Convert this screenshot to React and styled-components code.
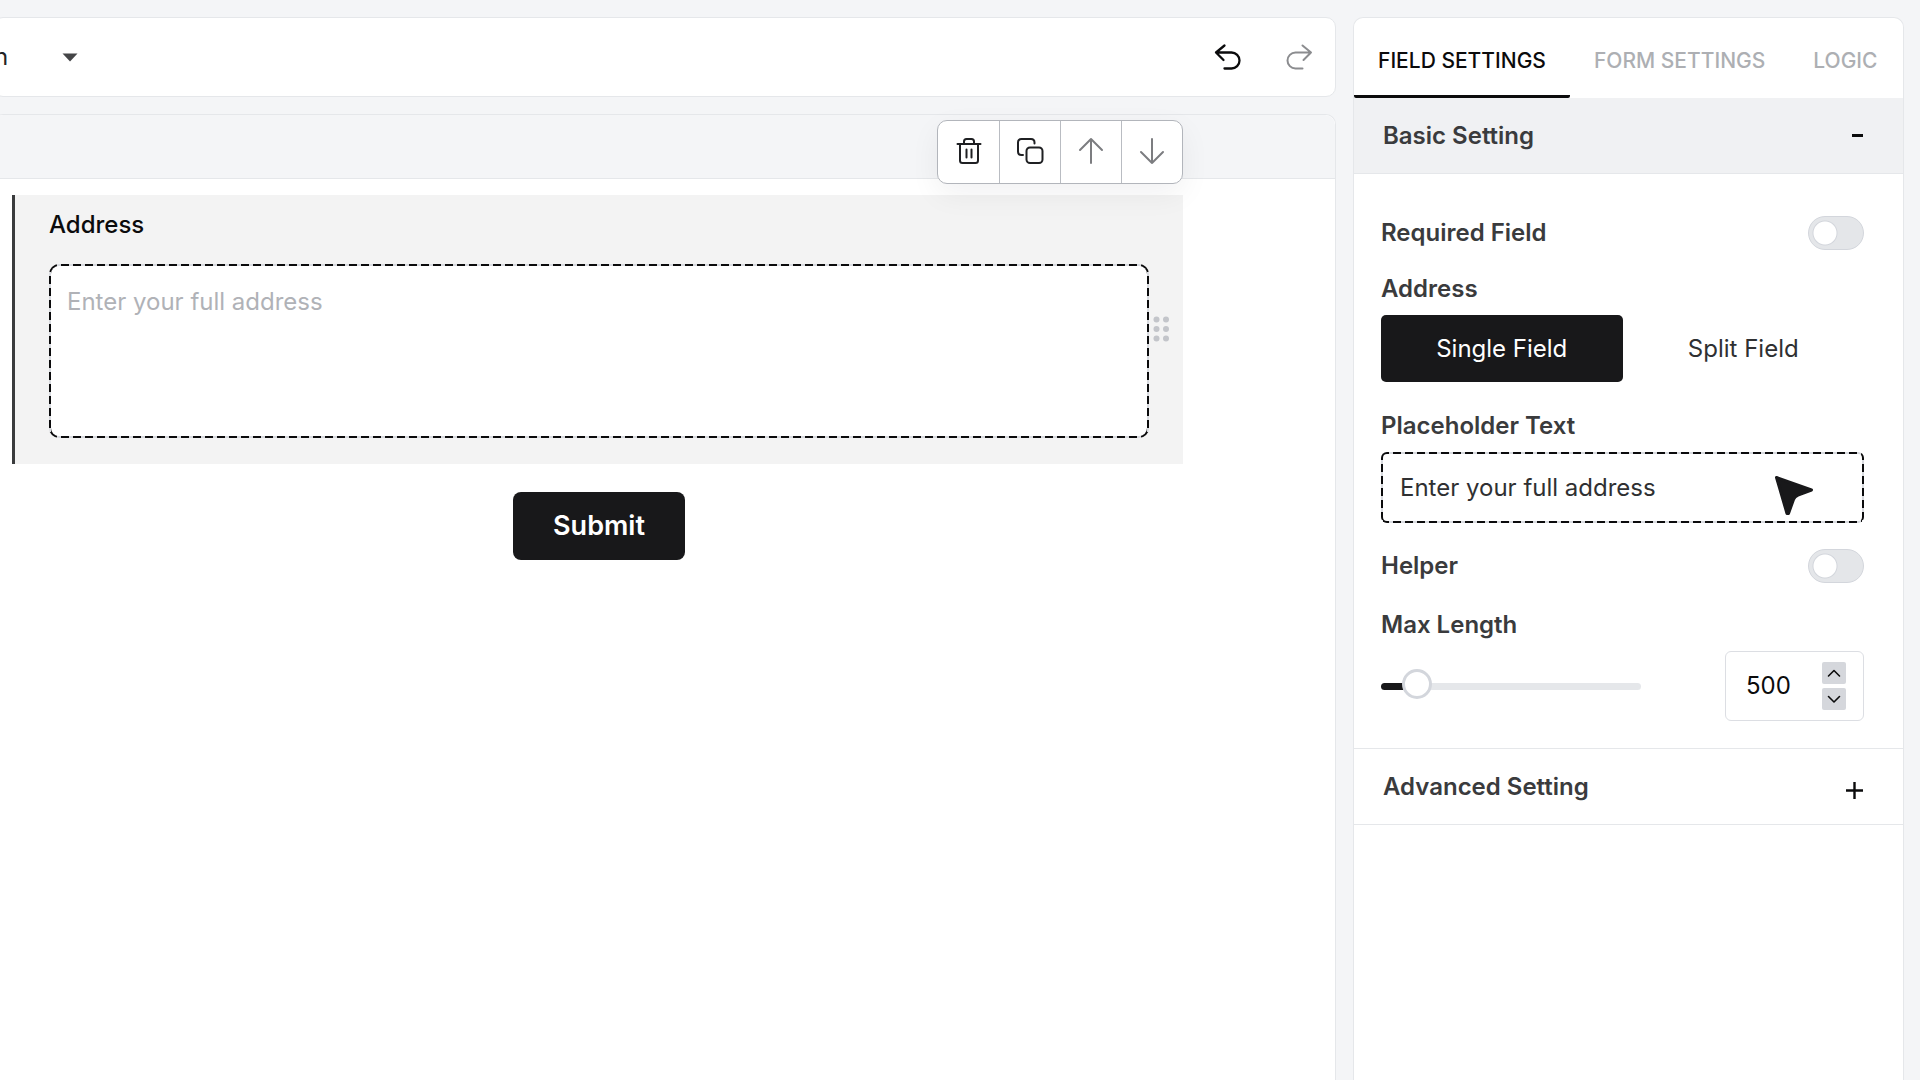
import React, { useState } from "react";
import styled, { createGlobalStyle, css } from "styled-components";

const GlobalStyle = createGlobalStyle`
  *, *::before, *::after { box-sizing: border-box; }
  html, body { margin: 0; padding: 0; }
  body {
    background: #f4f5f7;
    color: #0b0b0c;
    font-family: Inter, "Liberation Sans", sans-serif;
    font-size: 24px;
    line-height: 32px;
    -webkit-font-smoothing: antialiased;
  }
  button, input, select, textarea { font: inherit; color: inherit; margin: 0; }
  button { border: 0; background: none; padding: 0; cursor: pointer; }
`;

const line = "#e5e7ea";

const dashedFrame = css`
  border: 2px solid transparent;
  background:
    linear-gradient(#fff, #fff) padding-box,
    repeating-linear-gradient(180deg, #0b0b0c 0 8px, #d9dbe0 8px 12px) left / 2px 100% no-repeat border-box,
    repeating-linear-gradient(180deg, #0b0b0c 0 8px, #d9dbe0 8px 12px) right / 2px 100% no-repeat border-box,
    repeating-linear-gradient(90deg, #0b0b0c 0 8px, #d9dbe0 8px 12px) border-box;
`;

const Page = styled.div`
  display: grid;
  grid-template-columns: minmax(0, 1fr) 551px;
  gap: 17px;
  height: 100vh;
  padding: 17px 16px 0 0;
  overflow: hidden;
`;

const Workspace = styled.main`
  display: flex;
  flex-direction: column;
  gap: 17px;
  min-width: 0;
  margin-left: -7px;
`;

const TopBar = styled.header`
  display: flex;
  align-items: center;
  justify-content: space-between;
  height: 80px;
  padding: 0 22px 0 0;
  background: #fff;
  border: 1px solid ${line};
  border-radius: 10px;
`;

const FormPicker = styled.label`
  display: flex;
  align-items: center;
`;

const FormSelect = styled.select`
  appearance: none;
  width: 68px;
  padding: 0;
  border: 0;
  background: transparent;
  color: #222325;
`;

const History = styled.div`
  display: flex;
  gap: 43px;
`;

const HistoryButton = styled.button`
  display: flex;
  color: ${(p) => (p.$muted ? "#8b8c8f" : "#0b0b0c")};
`;

const Canvas = styled.section`
  flex: 1;
  display: flex;
  flex-direction: column;
  background: #fff;
  border: 1px solid ${line};
  border-bottom: 0;
  border-radius: 10px 10px 0 0;
`;

const CanvasStrip = styled.div`
  height: 64px;
  background: #f4f5f7;
  border-bottom: 1px solid ${line};
  border-radius: 10px 10px 0 0;
`;

const Form = styled.form`
  display: flex;
  flex-direction: column;
  gap: 28px;
  padding: 16px 152px 0 18px;
`;

const FieldBlock = styled.div`
  position: relative;
  display: flex;
  flex-direction: column;
  gap: 23px;
  width: 100%;
  padding: 14px 34px 26px;
  background: #f3f3f3;
  border-left: 3px solid #3a3b3d;
`;

const FieldLabel = styled.label`
  font-weight: 500;
`;

const AddressArea = styled.textarea`
  ${dashedFrame}
  display: block;
  width: 100%;
  height: 174px;
  padding: 20px 16px;
  border-radius: 10px;
  resize: none;
  &::placeholder { color: #b0b2b7; opacity: 1; }
`;

const FieldTools = styled.div`
  position: absolute;
  top: -75px;
  right: 0;
  display: flex;
  border: 1px solid #b2b5bb;
  border-radius: 10px;
  background: #fff;
  box-shadow: 0 10px 30px rgba(20, 24, 32, 0.06);
`;

const ToolButton = styled.button`
  display: flex;
  align-items: center;
  justify-content: center;
  width: 61px;
  height: 62px;
  padding-bottom: 2px;
  color: ${(p) => (p.$muted ? "#7c7d80" : "#1f2023")};
  & + & { border-left: 1px solid #b9bcc2; }
`;

const DragHandle = styled.button`
  position: absolute;
  top: 121px;
  right: 13px;
  display: flex;
  cursor: grab;
`;

const Actions = styled.div`
  display: flex;
  justify-content: center;
  padding-left: 3px;
`;

const SubmitButton = styled.button`
  height: 68px;
  padding: 0 40px;
  border-radius: 8px;
  background: #18181a;
  color: #fff;
  font-size: 27px;
  font-weight: 600;
`;

const Panel = styled.aside`
  display: flex;
  flex-direction: column;
  background: #fff;
  border: 1px solid ${line};
  border-bottom: 0;
  border-radius: 10px 10px 0 0;
`;

const Tabs = styled.div`
  display: flex;
`;

const Tab = styled.button`
  height: 80px;
  padding: 8px 24px 0;
  border-bottom: 3px solid ${(p) => (p.$active ? "#0b0b0c" : "transparent")};
  border-radius: 2px;
  color: ${(p) => (p.$active ? "#0b0b0c" : "#adafb3")};
  font-size: 21px;
  font-weight: 500;
  white-space: nowrap;
`;

const SectionToggle = styled.button`
  display: flex;
  align-items: center;
  justify-content: space-between;
  width: 100%;
  height: 76px;
  padding: 0 40px 0 29px;
  background: ${(p) => (p.$open ? "#f0f1f3" : "#fff")};
  border-bottom: 1px solid ${line};
  color: #3a3b3d;
  font-weight: 600;
`;

const Settings = styled.div`
  display: flex;
  flex-direction: column;
  gap: 26px;
  padding: 42px 39px 27px 27px;
  border-bottom: 1px solid ${line};
`;

const Stack = styled.div`
  display: flex;
  flex-direction: column;
  gap: 23px;
  padding-bottom: 2px;
`;

const Row = styled.div`
  display: flex;
  align-items: center;
  justify-content: space-between;
`;

const Group = styled.div`
  display: flex;
  flex-direction: column;
  gap: 10px;
`;

const SettingLabel = styled.label`
  color: #3a3b3d;
  font-weight: 600;
`;

const Switch = styled.input`
  appearance: none;
  width: 56px;
  height: 34px;
  border: 1px solid #d3d6dc;
  border-radius: 17px;
  background: radial-gradient(circle at 16px 16px, #fff 11px, #d3d6dc 12px, #e4e6e9 13px);
  cursor: pointer;
  &:checked {
    background: radial-gradient(circle at 38px 16px, #fff 11px, #18181a 12px);
  }
`;

const Segments = styled.div`
  display: grid;
  grid-template-columns: 1fr 1fr;
`;

const Segment = styled.button`
  height: 67px;
  border-radius: 5px;
  background: ${(p) => (p.$active ? "#18181a" : "transparent")};
  color: ${(p) => (p.$active ? "#fff" : "#2f3032")};
`;

const TextBox = styled.input`
  ${dashedFrame}
  display: block;
  width: 100%;
  height: 71px;
  padding: 0 17px;
  border-radius: 6px;
  color: #2f3032;
`;

const Slider = styled.input`
  appearance: none;
  width: 260px;
  height: 32px;
  background: transparent;
  &::-webkit-slider-runnable-track {
    height: 7px;
    border-radius: 4px;
    background: linear-gradient(90deg, #18181a ${(p) => p.$fill}%, #e5e7ea ${(p) => p.$fill}%);
  }
  &::-webkit-slider-thumb {
    appearance: none;
    width: 30px;
    height: 30px;
    margin-top: -14px;
    border: 3px solid #d3d6dc;
    border-radius: 50%;
    background: #fff;
  }
`;

const Stepper = styled.div`
  display: flex;
  align-items: center;
  justify-content: space-between;
  width: 139px;
  height: 70px;
  padding: 0 17px 0 20px;
  border: 1px solid #dcdee3;
  border-radius: 6px;
`;

const StepperInput = styled.input`
  appearance: textfield;
  width: 64px;
  padding: 0;
  border: 0;
  background: transparent;
  &::-webkit-inner-spin-button { appearance: none; }
`;

const StepperButtons = styled.div`
  display: flex;
  flex-direction: column;
  gap: 4px;
`;

const StepButton = styled.button`
  display: flex;
  align-items: center;
  justify-content: center;
  width: 24px;
  height: 22px;
  border-radius: 2px;
  background: #d5d7dc;
`;

const PointerHost = styled.div`
  position: relative;
`;

const Pointer = styled.svg`
  position: absolute;
  right: 50px;
  top: 23px;
  pointer-events: none;
`;

const Icon = ({ size = 28, stroke = 2, children }) => (
  <svg width={size} height={size} viewBox={`0 0 ${size} ${size}`} fill="none" stroke="currentColor"
    strokeWidth={stroke} strokeLinecap="round" strokeLinejoin="round" aria-hidden="true">
    {children}
  </svg>
);

const UndoPath = () => (
  <path d="M10.5 2.5L2 9.5L9.5 17M2 9.5H17.5A8 8 0 0 1 17.5 25.5H10.5" />
);

export default function App() {
  const [max, setMax] = useState(500);
  const [text, setText] = useState("Enter your full address");
  const limit = 5500;
  const fill = (max / limit) * 100;
  return (
    <>
      <GlobalStyle />
      <Page>
        <Workspace>
          <TopBar>
            <FormPicker>
              <FormSelect aria-label="Form"><option>n</option></FormSelect>
              <svg width="16" height="9" viewBox="0 0 16 9" aria-hidden="true">
                <path d="M0.5 0.5H15.5L8 8.5Z" fill="#444547" />
              </svg>
            </FormPicker>
            <History>
              <HistoryButton type="button" aria-label="Undo"><Icon stroke={2.3}><UndoPath /></Icon></HistoryButton>
              <HistoryButton type="button" aria-label="Redo" $muted>
                <Icon><g transform="matrix(-1 0 0 1 28 0)"><UndoPath /></g></Icon>
              </HistoryButton>
            </History>
          </TopBar>

          <Canvas>
            <CanvasStrip />
            <Form onSubmit={(e) => e.preventDefault()}>
              <FieldBlock>
                <FieldLabel htmlFor="address">Address</FieldLabel>
                <AddressArea id="address" placeholder={text} />
                <FieldTools>
                  <ToolButton type="button" aria-label="Delete">
                    <Icon>
                      <path d="M2.5 7H25.5M5 7V23.5Q5 26 7.5 26H20.5Q23 26 23 23.5V7M9 7V4.5Q9 2 11.5 2H16.5Q19 2 19 4.5V7M11.5 12.5V20.5M16.5 12.5V20.5" />
                    </Icon>
                  </ToolButton>
                  <ToolButton type="button" aria-label="Duplicate">
                    <Icon>
                      <rect x="10.5" y="10.5" width="16" height="15.5" rx="3.5" />
                      <path d="M7 18H5.5Q2 18 2 14.5V5.5Q2 2 5.5 2H15Q18.5 2 18.5 5.5V6.5" />
                    </Icon>
                  </ToolButton>
                  <ToolButton type="button" aria-label="Move up" $muted>
                    <Icon><path d="M14 26V2M3 13L14 2L25 13" /></Icon>
                  </ToolButton>
                  <ToolButton type="button" aria-label="Move down" $muted>
                    <Icon><path d="M14 2V26M3 15L14 26L25 15" /></Icon>
                  </ToolButton>
                </FieldTools>
                <DragHandle type="button" aria-label="Drag field">
                  <svg width="17" height="26" viewBox="0 0 17 26" fill="#c3c5ca" aria-hidden="true">
                    {[3.5, 13].map((x) => [3.5, 13, 22.5].map((y) => (
                      <circle key={`${x}-${y}`} cx={x} cy={y} r="3" />
                    )))}
                  </svg>
                </DragHandle>
              </FieldBlock>
              <Actions>
                <SubmitButton type="submit">Submit</SubmitButton>
              </Actions>
            </Form>
          </Canvas>
        </Workspace>

        <Panel>
          <Tabs role="tablist">
            <Tab type="button" role="tab" aria-selected="true" $active>FIELD SETTINGS</Tab>
            <Tab type="button" role="tab" aria-selected="false">FORM SETTINGS</Tab>
            <Tab type="button" role="tab" aria-selected="false">LOGIC</Tab>
          </Tabs>
          <SectionToggle type="button" aria-expanded="true" $open>
            Basic Setting
            <svg width="11" height="3" aria-hidden="true"><rect width="11" height="3" fill="#0b0b0c" /></svg>
          </SectionToggle>
          <Settings>
            <Stack>
              <Row>
                <SettingLabel htmlFor="required">Required Field</SettingLabel>
                <Switch id="required" type="checkbox" role="switch" />
              </Row>
              <Group>
                <SettingLabel as="span">Address</SettingLabel>
                <Segments>
                  <Segment type="button" $active>Single Field</Segment>
                  <Segment type="button">Split Field</Segment>
                </Segments>
              </Group>
            </Stack>
            <Group>
              <SettingLabel htmlFor="placeholder">Placeholder Text</SettingLabel>
              <PointerHost>
                <TextBox id="placeholder" type="text" value={text} onChange={(e) => setText(e.target.value)} />
                <Pointer width="40" height="41" viewBox="0 0 40 41" aria-hidden="true">
                  <path d="M2.5 2.5L37.5 15L24 20Q20.5 21.5 19.5 24.5L14.5 38.5L13 38.5Z" fill="#18181a" stroke="#18181a" strokeWidth="3" strokeLinejoin="round" />
                </Pointer>
              </PointerHost>
            </Group>
            <Row>
              <SettingLabel htmlFor="helper">Helper</SettingLabel>
              <Switch id="helper" type="checkbox" role="switch" />
            </Row>
            <Group>
              <SettingLabel htmlFor="max">Max Length</SettingLabel>
              <Row>
                <Slider aria-label="Max length" type="range" min="0" max={limit} value={max} $fill={fill}
                  onChange={(e) => setMax(Number(e.target.value))} />
                <Stepper>
                  <StepperInput id="max" type="number" value={max} onChange={(e) => setMax(Number(e.target.value))} />
                  <StepperButtons>
                    <StepButton type="button" aria-label="Increase" onClick={() => setMax(max + 1)}>
                      <Icon size={14} stroke={1.6}><path d="M1.5 10L7 4.5L12.5 10" /></Icon>
                    </StepButton>
                    <StepButton type="button" aria-label="Decrease" onClick={() => setMax(max - 1)}>
                      <Icon size={14} stroke={1.6}><path d="M1.5 4.5L7 10L12.5 4.5" /></Icon>
                    </StepButton>
                  </StepperButtons>
                </Stepper>
              </Row>
            </Group>
          </Settings>
          <SectionToggle type="button" aria-expanded="false">
            Advanced Setting
            <svg width="17" height="25" aria-hidden="true">
              <path d="M0 16.5H17M8.5 8V25" stroke="#0b0b0c" strokeWidth="2.4" />
            </svg>
          </SectionToggle>
        </Panel>
      </Page>
    </>
  );
}
